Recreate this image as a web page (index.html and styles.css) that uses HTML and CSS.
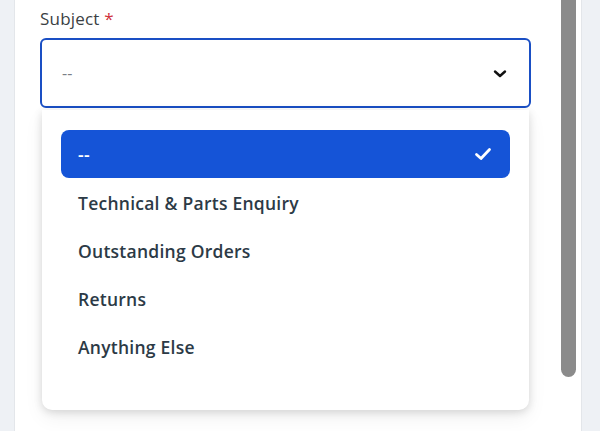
FILE: index.html
```html
<!DOCTYPE html>
<html lang="en">
<head>
    <meta charset="UTF-8">
    <meta name="viewport" content="width=device-width, initial-scale=1.0">
    <title>Subject select</title>
    <link rel="stylesheet" href="styles.css">
</head>
<body>

<div class="page">
    <div class="panel">
        <div class="field">
            <label class="field-label">Subject <span class="required">*</span></label>
            <div class="select">
                <span class="select-value">--</span>
                <svg class="chevron" width="14" height="10" viewBox="0 0 14 10">
                    <path d="M2 2.5 L7 7 L12 2.5" fill="none" stroke="#111" stroke-width="2.4" stroke-linecap="round" stroke-linejoin="round"/>
                </svg>
            </div>
            <ul class="options">
                <li class="option selected">
                    <span>--</span>
                    <svg class="check" width="18" height="14" viewBox="0 0 18 14">
                        <path d="M2.5 7.5 L7 11.5 L15.5 2.5" fill="none" stroke="#fff" stroke-width="2.8" stroke-linecap="round" stroke-linejoin="round"/>
                    </svg>
                </li>
                <li class="option">Technical &amp; Parts Enquiry</li>
                <li class="option">Outstanding Orders</li>
                <li class="option">Returns</li>
                <li class="option">Anything Else</li>
            </ul>
        </div>
        <div class="scrollbar"><div class="thumb"></div></div>
    </div>
</div>

</body>
</html>
```

FILE: styles.css
```css
body {
    margin: 0;
    font-family: "Open Sans", "Noto Sans", sans-serif;
    background-color: #eef1f5;
    height: 431px;
    overflow: hidden;
}
.page {
    display: flex;
    padding-left: 14px;
    height: 431px;
}
.panel {
    width: 566px;
    background-color: #ffffff;
    border-left: 1px solid #e3e6ea;
    border-right: 1px solid #e3e6ea;
    display: flex;
}
.field {
    width: 491px;
    padding-left: 25px;
    padding-top: 6px;
}
.field-label {
    display: block;
    font-size: 17px;
    letter-spacing: 0.2px;
    color: #3b3f44;
    height: 32px;
    line-height: 26px;
}
.required {
    color: #d0323b;
}
.select {
    height: 66px;
    border: 2px solid #1a4fc4;
    border-radius: 6px;
    display: flex;
    align-items: center;
    justify-content: space-between;
    padding: 0 22px 0 20px;
}
.select-value {
    color: #7b7f85;
    font-size: 16px;
}
.chevron {
    margin-top: 2px;
}
.options {
    list-style: none;
    margin: 2px 2px 0;
    padding: 20px 19px 40px;
    background-color: #ffffff;
    border-radius: 0 0 10px 10px;
    box-shadow: 0 2px 8px rgba(0, 0, 0, 0.14), 0 8px 20px rgba(0, 0, 0, 0.06);
}
.option {
    height: 48px;
    display: flex;
    align-items: center;
    justify-content: space-between;
    padding: 2px 18px 0 17px;
    box-sizing: border-box;
    font-size: 17.5px;
    letter-spacing: 0.25px;
    font-weight: 600;
    color: #2c3a46;
}
.option.selected {
    background-color: #1554d7;
    color: #ffffff;
    border-radius: 8px;
    padding-top: 0;
}
.scrollbar {
    margin-left: 30px;
    width: 15px;
}
.thumb {
    height: 377px;
    background-color: #8b8b8b;
    border-radius: 0 0 8px 8px;
}
```
